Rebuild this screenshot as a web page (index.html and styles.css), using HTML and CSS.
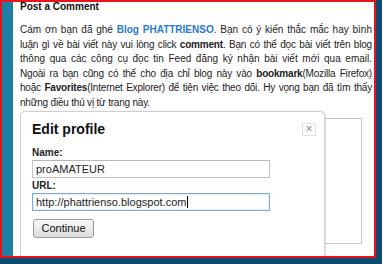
FILE: index.html
```html
<!DOCTYPE html>
<html>
<head>
<meta charset="utf-8">
<link rel="stylesheet" href="styles.css">
</head>
<body>
<div class="frame">
  <div class="side"></div>
  <div class="page">
    <div class="title">Post a Comment</div>
    <div class="para">
      <span class="ln">Cám ơn bạn đã ghé <b class="link">Blog PHATTRIENSO</b>. Bạn có ý kiến thắc mắc hay bình</span>
      <span class="ln tight">luận gì về bài viết này vui lòng click <b>comment</b>. Bạn có thể đọc bài viết trên blog</span>
      <span class="ln">thông qua các công cụ đọc tin Feed đăng ký nhận bài viết mới qua email.</span>
      <span class="ln tight">Ngoài ra bạn cũng có thể cho địa chỉ blog này vào <b>bookmark</b>(Mozilla Firefox)</span>
      <span class="ln tight">hoặc <b>Favorites</b>(Internet Explorer) để tiện việc theo dõi. Hy vọng bạn đã tìm thấy</span>
      <span class="ln last tight">những điều thú vị từ trang này.</span>
    </div>
    <div class="textbox"></div>
    <div class="dialog">
      <div class="dhead">
        <span class="dtitle">Edit profile</span>
        <span class="close">×</span>
      </div>
      <div class="label">Name:</div>
      <div class="input">proAMATEUR</div>
      <div class="label">URL:</div>
      <div class="input focus">http://phattrienso.blogspot.com<span class="caret"></span></div>
      <div class="btn">Continue</div>
    </div>
  </div>
</div>
</body>
</html>
```
FILE: styles.css
```css
html, body {
  margin: 0;
  padding: 0;
}
body {
  width: 382px;
  height: 264px;
  background: #0e4b70;
  overflow: hidden;
  font-family: "Liberation Sans", Arial, sans-serif;
  color: #222;
}
.frame {
  width: 372px;
  height: 254px;
  border: 2px solid #e8141c;
  display: flex;
  overflow: hidden;
}
.side {
  width: 11px;
  flex: none;
  background: #1f7ea2;
}
.page {
  flex: 1;
  background: #fff;
  position: relative;
  padding-left: 7px;
  overflow: hidden;
}
.title {
  font-weight: bold;
  font-size: 10px;
  line-height: 10px;
  margin-top: 0;
  color: #111;
}
.para {
  margin-top: 11px;
  font-size: 10px;
  line-height: 14.6px;
  width: 352px;
  color: #222;
}
.ln {
  display: block;
  text-align: justify;
  text-align-last: justify;
  white-space: nowrap;
}
.ln.tight {
  letter-spacing: -0.2px;
}
.ln.last {
  text-align-last: left;
}
.link {
  color: #2a78d4;
}
.textbox {
  margin-top: 7px;
  width: 340px;
  height: 124px;
  border: 1px solid #c8c8c8;
}
.dialog {
  position: absolute;
  left: 7px;
  top: 109px;
  width: 292px;
  height: 160px;
  padding: 0 0 0 11px;
  background: #fff;
  border: 1px solid #cfcfcf;
  border-radius: 5px 5px 0 0;
  box-shadow: 1px 0 2px rgba(0,0,0,0.12);
}
.dhead {
  display: flex;
  align-items: center;
  justify-content: space-between;
  height: 18px;
  margin-top: 8px;
  padding-right: 8px;
}
.dtitle {
  font-weight: bold;
  font-size: 14px;
  color: #111;
}
.close {
  width: 12px;
  height: 11px;
  border: 1px solid #e2e2e2;
  color: #888;
  font-size: 12px;
  line-height: 11px;
  text-align: center;
}
.label {
  font-weight: bold;
  font-size: 10px;
  line-height: 12px;
  color: #222;
}
.dhead + .label {
  margin-top: 9px;
}
.input {
  width: 233px;
  height: 16px;
  border: 1px solid #c6c6c6;
  border-top-color: #b8b8b8;
  font-size: 11px;
  line-height: 16px;
  padding-left: 3px;
  margin: 1px 0 2px;
  color: #222;
}
.input.focus {
  border-color: #7fa9d6;
  box-shadow: inset 0 0 0 1px #e3eef9;
}
.caret {
  display: inline-block;
  width: 1px;
  height: 12px;
  background: #000;
  vertical-align: -2px;
  margin-left: 1px;
}
.btn {
  margin-top: 8px;
  width: 59px;
  height: 17px;
  border: 1px solid #9a9a9a;
  border-radius: 3px;
  background: linear-gradient(#fafafa, #dcdcdc);
  font-size: 11px;
  line-height: 17px;
  text-align: center;
  color: #111;
  margin-left: 1px;
}
```
